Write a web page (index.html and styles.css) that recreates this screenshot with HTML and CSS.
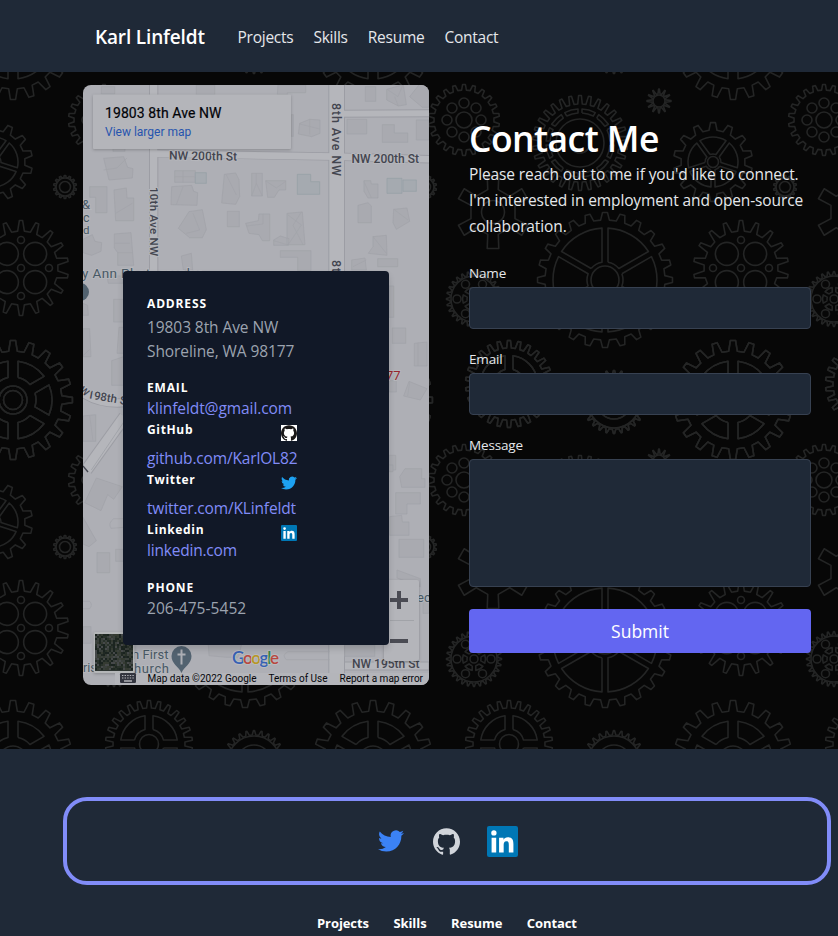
FILE: index.html
```html
<!DOCTYPE html>
<html lang="en">
<head>
<meta charset="utf-8">
<title>Karl Linfeldt</title>
<link rel="stylesheet" href="styles.css">
</head>
<body>
<svg class="defs" width="0" height="0" aria-hidden="true">
  <defs>
    <symbol id="twitter" viewBox="0 0 24 24"><path d="M23.953 4.57a10 10 0 01-2.825.775 4.958 4.958 0 002.163-2.723c-.951.555-2.005.959-3.127 1.184a4.92 4.92 0 00-8.384 4.482C7.69 8.095 4.067 6.13 1.64 3.162a4.822 4.822 0 00-.666 2.475c0 1.71.87 3.213 2.188 4.096a4.904 4.904 0 01-2.228-.616v.06a4.923 4.923 0 003.946 4.827 4.996 4.996 0 01-2.212.085 4.936 4.936 0 004.604 3.417 9.867 9.867 0 01-6.102 2.105c-.39 0-.779-.023-1.17-.067a13.995 13.995 0 007.557 2.209c9.053 0 13.998-7.496 13.998-13.985 0-.21 0-.42-.015-.63A9.935 9.935 0 0024 4.59z"/></symbol>
    <symbol id="github" viewBox="0 0 24 24"><path d="M12 .297c-6.63 0-12 5.373-12 12 0 5.303 3.438 9.8 8.205 11.385.6.113.82-.258.82-.577 0-.285-.01-1.04-.015-2.04-3.338.724-4.042-1.61-4.042-1.61C4.422 18.07 3.633 17.7 3.633 17.7c-1.087-.744.084-.729.084-.729 1.205.084 1.838 1.236 1.838 1.236 1.07 1.835 2.809 1.305 3.495.998.108-.776.417-1.305.76-1.605-2.665-.3-5.466-1.332-5.466-5.93 0-1.31.465-2.38 1.235-3.22-.135-.303-.54-1.523.105-3.176 0 0 1.005-.322 3.3 1.23.96-.267 1.98-.399 3-.405 1.02.006 2.04.138 3 .405 2.28-1.552 3.285-1.23 3.285-1.23.645 1.653.24 2.873.12 3.176.765.84 1.23 1.91 1.23 3.22 0 4.61-2.805 5.625-5.475 5.92.42.36.81 1.096.81 2.22 0 1.606-.015 2.896-.015 3.286 0 .315.21.69.825.57C20.565 22.092 24 17.592 24 12.297c0-6.627-5.373-12-12-12"/></symbol>
    <symbol id="linkedin" viewBox="0 0 24 24"><rect width="24" height="24" rx="1.6" fill="#0077b5"/><path fill="#fff" d="M20.447 20.452h-3.554v-5.569c0-1.328-.027-3.037-1.852-3.037-1.853 0-2.136 1.445-2.136 2.939v5.667H9.351V9h3.414v1.561h.046c.477-.9 1.637-1.85 3.37-1.85 3.601 0 4.267 2.37 4.267 5.455v6.286zM5.337 7.433a2.062 2.062 0 01-2.063-2.065 2.064 2.064 0 112.063 2.065zm1.782 13.019H3.555V9h3.564v11.452z"/></symbol>
  </defs>
</svg>

<header class="nav">
  <a class="brand">Karl Linfeldt</a>
  <nav class="nav-links"><a>Projects</a><a>Skills</a><a>Resume</a><a>Contact</a></nav>
</header>

<main class="contact">
  <svg class="gears" viewBox="0 72 838 677" aria-hidden="true">
    <defs><g id="tile"></g></defs>
    <use href="#tile" x="-360"/><use href="#tile"/><use href="#tile" x="360"/><use href="#tile" x="720"/>
    <use href="#tile" x="-360" y="360"/><use href="#tile" y="360"/><use href="#tile" x="360" y="360"/><use href="#tile" x="720" y="360"/>
  </svg>

  <section class="map">
    <svg class="map-art" viewBox="83 85 346 600">
      <rect x="83" y="85" width="346" height="600" fill="#aeafb5"/>
      <g class="roads" transform="translate(83 80) scale(.33333)">
        <path d="M212 0V780" stroke-width="28"/>
        <path d="M225 220L760 230L1050 238" stroke-width="25"/>
        <path d="M785 101L1050 100" stroke-width="24"/>
        <path d="M761 0V1830" stroke-width="50"/>
      </g>
      <g class="roads-fill" transform="translate(83 80) scale(.33333)">
        <path d="M212 0V780" stroke-width="22"/>
        <path d="M213 221L760 230L1050 238" stroke-width="20"/>
        <path d="M762 101L1050 100" stroke-width="18"/>
        <path d="M761 0V1830" stroke-width="44"/>
      </g>
      <g class="roads" transform="translate(83 270) scale(.33333)">
        <path d="M0 370Q60 410 150 395" stroke-width="28"/>
        <path d="M125 440L10 600" stroke-width="38"/>
      </g>
      <g class="roads-fill" transform="translate(83 270) scale(.33333)">
        <path d="M0 370Q60 410 150 395" stroke-width="22"/>
        <path d="M125 440L10 600" stroke-width="32"/>
        <path d="M125 452L25 600" stroke-width="2" stroke="#999ba2"/>
      </g>
      <g class="bld" transform="translate(83 80) scale(.33333)">
        <path d="M55 20h40v22H55zM340 15h55v30h-55zM585 15h83v23h-55v6h-30zM847 20h31v44h-31zM911 28l50-14 9 60-24 4-35-18zM980 50l30-38h28v70h-20zM625 104h6v65h-6zM650 130l30-12 31 2v40l-25 10-40-8zM62 235l60-5 12 32 16 4-2 28-70 6zM20 320h52v78H38v-46H20zM93 330l37-6 2 30h20v68H98zM275 272h62v35h-62zM266 320l60-4 6 18 12 4-2 38-78-2zM424 283l34-4 10 20 2 50-12 24-42-4zM506 280h32v68h-32zM548 302h60v28h-20l-14 22h-20zM318 395l40-6 12 60-12 24h-38l-34-28zM433 394h36v46h-36zM488 430l38-8 2-20h32v80h-22l-10-18-30-4zM612 400l46-4 8 98h-54zM572 480l20-12 26 8-2 20h-44zM94 462l50-4 8 98h-48v-38l-10-14zM0 478l28-14 8 20 20 4-2 26-28 12-26-8zM295 528l30-8 4 50h-28zM592 512h92v60h-40v-40h-52zM792 118h59v44h-59zM898 134h36v25h40v28h-76zM1000 120h38v60h-38zM843 302h20l2 10h20v42h-30l-12-20zM825 376l30-8 10 10v50h-40zM932 388l40-4 8 40-40 24-10-20zM870 470l40-4 2 60-56-6 14-20zM806 540l40-6 4 36h-44zM884 536h60v24h-60zM90 206h36v8H90z"/>
        <path fill="#a5aab0" stroke="#929da4" d="M337 278h33v32h-33zM643 283h40v22h27v38h-67zM912 295h45v45h-45zM960 300h40v34h-40z"/>
        <path fill="none" d="M62 270l40-6 30-30M300 273v34M275 290h62M300 320l-20 54M430 285l30 60M520 280v30l-14 38M520 310l18 38M550 304l30 20 28-20M330 400l20 50-40 10M540 402v30l-50 6M615 405l40 30-40 60M655 396l-25 40 30 58M96 490h45M105 518h45M650 132l60 15M680 118v45M915 30l30 20 15-36M935 50l10 26M843 305l22 48M935 390l40 30M870 470l40 50M810 560l40-20M572 482l40 12M98 400l50-30"/>
      </g>
      <g class="bld" transform="translate(83 270) scale(.33333)">
        <path d="M72 18h48v22H76zM92 88h34v68H92zM0 100l14 6 2 30H0zM0 176h20l4 84H0zM108 172h14v78h-20zM86 272l36-12v86H86zM0 438l38-4v80H0zM918 48h14v94h-14zM928 174h40v46h-40zM994 220l38-4v72h-38zM918 332h22v34h-22zM978 334l54 22-20 34-50-12zM918 556h20v44h-20z"/>
        <path fill="none" d="M1005 218v70M980 336l-6 42M20 436l10 76M0 258l20-20"/>
      </g>
      <g class="bld" transform="translate(83 460) scale(.33333)">
        <path d="M40 54L118 80 92 118 74 104 54 152 5 128zM0 172l40 70-22 18-18-8zM42 278h38v60H42zM98 268h24v36H98zM918 15h12v20h-12zM950 50l16-24h50v30h10v26h-70zM938 98h74v34h-40v30h-34zM920 170l36-4 2 20h20v40h-58zM948 238h74v54h-74zM942 330l70 26v24l-70-26zM0 500h24v50H0zM376 552h100l-10 40h-34l-54-5zM785 555h90v34h-90zM1020 420h18v40h-18z"/>
        <path fill="none" d="M122 176H92Q74 190 84 205L122 202M0 424H20Q30 434 20 446H0M740 575H615Q595 585 610 599H740"/>
      </g>
      <path d="M345 662H429V670H345" fill="#b5b6bb" stroke="#9c9da3"/>
      <g class="map-text">
        <text x="169" y="159.5" font-size="12" textLength="68" transform="rotate(1 169 159)">NW 200th St</text>
        <text x="351.500" y="162.500" font-size="12">NW 200th St</text>
        <text transform="translate(149.500 187) rotate(90)" font-size="11.500" textLength="69">10th Ave NW</text>
        <text transform="translate(331.500 103) rotate(90)" font-size="12.500" textLength="73">8th Ave NW</text>
        <text transform="translate(331.500 260) rotate(90)" font-size="12.500" textLength="73">8th Ave NW</text>
        <text x="352" y="667.500" font-size="12">NW 195th St</text>
        <text x="87" y="398" font-size="11.500" transform="rotate(10 87 398)">198th St</text>
        <text x="79" y="391" font-size="10" transform="rotate(40 79 391)">W</text>
        <g class="poi"><text x="82" y="209" font-size="13">&amp;</text><text x="83" y="222" font-size="12.500">c</text><text x="83" y="234" font-size="11.500">d</text>
        <text x="82" y="278" font-size="13.500" textLength="119">y Ann Photography</text>
        <text x="132" y="659" font-size="13" textLength="36.500">n First</text><text x="134" y="673" font-size="13" textLength="35">hurch</text><text x="83" y="672" font-size="12.500">ris</text><text x="417" y="602" font-size="13">ec</text></g>
        <text x="364" y="379.500" font-size="13" class="red">98177</text>
      </g>
      <path d="M83 466l5 6" stroke="#43454f" stroke-width="1.300"/>
      <circle cx="80" cy="292" r="9" fill="#52626f"/>
      <g fill="#526270"><path d="M171.500 656a10 10 0 1 1 20 0c0 8-7 10-10 17-3-7-10-9-10-17z"/><path d="M181.500 649.500v15M177.500 654.500h8" stroke="#adafb5" stroke-width="2"/></g>
      <g class="raised"><rect x="93" y="94.500" width="198" height="54.500" rx="1" fill="#b4b5ba"/><rect x="384" y="580" width="35" height="81" rx="2" fill="#b4b5ba"/><rect x="93.500" y="632" width="41" height="41" rx="2" fill="#b4b6b8"/></g>
      <path d="M390 620.500h24" stroke="#a1a3a8"/><path d="M390 600h18M399 591v18M390 641h18" stroke="#4a4b53" stroke-width="4"/>
      <text class="place" x="105" y="118" textLength="116.500">19803 8th Ave NW</text>
      <text class="larger" x="105" y="136">View larger map</text>
      <g id="satellite"><rect x="95" y="634" width="38" height="37" fill="#2d3431"/></g>
      <path d="M115 673H429V685H115z" fill="#b4b5ba"/>
      <rect x="120" y="673" width="16" height="10" rx="1.200" fill="#33353f"/>
      <path d="M122 675.500h12M122 678h12" stroke="#b4b5ba" stroke-width="1.200" stroke-dasharray="1.400 1.200"/><path d="M124 681h8" stroke="#b4b5ba" stroke-width="1.400"/>
      <g class="credit"><text x="147.500" y="681.500" textLength="109">Map data ©2022 Google</text><text x="268.500" y="681.500" textLength="59">Terms of Use</text><text x="339.500" y="681.500" textLength="83.500">Report a map error</text></g>
      <text class="logo" x="232" y="664" textLength="47"><tspan fill="#3561b4">G</tspan><tspan fill="#b8483f">o</tspan><tspan fill="#b79725">o</tspan><tspan fill="#3561b4">g</tspan><tspan fill="#368649">l</tspan><tspan fill="#b8483f">e</tspan></text>
    </svg>
    <div class="card">
      <h2>ADDRESS</h2>
      <p class="address">19803 8th Ave NW<br>Shoreline, WA 98177</p>
      <h2 class="spaced">EMAIL</h2>
      <a class="email">klinfeldt@gmail.com</a>
      <div class="row"><h2>GitHub</h2><svg class="icon gh"><use href="#github"/></svg></div>
      <a class="low">github.com/KarlOL82</a>
      <div class="row"><h2>Twitter</h2><svg class="icon tw"><use href="#twitter"/></svg></div>
      <a class="low">twitter.com/KLinfeldt</a>
      <div class="row"><h2>Linkedin</h2><svg class="icon"><use href="#linkedin"/></svg></div>
      <a class="li">linkedin.com</a>
      <h2 class="phone">PHONE</h2>
      <p class="number">206-475-5452</p>
    </div>
  </section>

  <form class="form">
    <h1>Contact Me</h1>
    <p class="intro">Please reach out to me if you'd like to connect.<br>I'm interested in employment and open-source<br>collaboration.</p>
    <label for="name">Name</label><input id="name">
    <label for="email">Email</label><input id="email">
    <label for="message">Message</label><textarea id="message"></textarea>
    <button type="button">Submit</button>
  </form>
</main>

<footer>
  <div class="social">
    <svg class="s-tw"><use href="#twitter"/></svg>
    <svg class="s-gh"><use href="#github"/></svg>
    <svg class="s-li"><use href="#linkedin"/></svg>
  </div>
  <nav class="foot-links"><a>Projects</a><a>Skills</a><a>Resume</a><a>Contact</a></nav>
</footer>
<script src="gears.js"></script>
</body>
</html>
```
FILE: styles.css
```css
* { box-sizing: border-box; }
body { margin: 0; width: 838px; height: 936px; overflow: hidden; background: #1f2937; color: #fff; font-family: "Open Sans", "Noto Sans", sans-serif; font-size: 15.5px; }
h1, h2, p { margin: 0; }
.defs { position: absolute; }
.nav { height: 72px; padding: 2px 0 0 95px; display: flex; align-items: center; background: #1f2937; }
.brand { width: 142.5px; font-size: 19px; font-weight: 600; letter-spacing: -.15px; }
.nav-links { display: flex; gap: 20px; color: #e5e7eb; letter-spacing: -.25px; }
.contact { position: relative; height: 677px; padding: 13px 27px 0 83px; display: flex; gap: 40px; background: #070707; overflow: hidden; }
.gears { position: absolute; inset: 0; width: 838px; height: 677px; }
#tile { fill: none; stroke: #242525; stroke-width: 1.6; }
.map { position: relative; width: 346px; height: 600px; border-radius: 8px; overflow: hidden; }
.map-art { display: block; width: 346px; height: 600px; }
.roads path { stroke: #9c9da4; fill: none; }
.roads-fill path { stroke: #b5b6bb; fill: none; }
.roads-fill path[stroke] { stroke: #999ba2; }
.bld path { fill: #a9aab0; stroke: #a0a1a7; stroke-width: 2; }
.bld path[fill="none"] { fill: none; stroke: #a2a3a9; }
.bld path[fill="#a5aab0"] { fill: #a5aab0; stroke: #949ea5; }
.map-text { font-family: Roboto, sans-serif; font-weight: 500; fill: #43454f; stroke: #b5b6bb; stroke-width: 2px; paint-order: stroke; }
.poi { font-weight: 400; fill: #485965; }
.red { fill: #97262d; font-weight: 400; }
.raised { filter: drop-shadow(0 1px 1.5px rgba(0, 0, 0, .22)); }
.place { font: 14px Roboto, sans-serif; fill: #020308; stroke: #020308; stroke-width: .2px; }
.larger { font: 12px Roboto, sans-serif; fill: #2754ae; }
.credit { font: 10px Roboto, sans-serif; fill: #05060a; }
.logo { font: 600 17px Lato, sans-serif; stroke: #b9babf; stroke-width: 2px; paint-order: stroke; }
.card { position: absolute; left: 40px; top: 186px; width: 266px; height: 374px; padding: 21px 24px 0; border-radius: 4px; background: #111827; box-shadow: 0 4px 6px rgba(0, 0, 0, .15); }
.card h2 { font-size: 12px; line-height: 24px; font-weight: 700; letter-spacing: .7px; }
.card p { color: #9ca3af; line-height: 24px; letter-spacing: -.08px; }
.card .address { margin-top: -1px; }
.card a { display: block; color: #818cf8; line-height: 22px; letter-spacing: -.16px; }
.card .email { margin-top: -2px; height: 23px; letter-spacing: -.08px; }
.card .spaced { margin-top: 14px; line-height: 22px; letter-spacing: .85px; }
.card h2:first-child, .card .phone { letter-spacing: .85px; }
.row { display: flex; justify-content: space-between; width: 150px; height: 21px; }
.card .row h2 { line-height: 20px; letter-spacing: .65px; }
.icon { width: 16px; height: 16px; margin-top: 5px; }
.gh { background: #fff; fill: #191717; }
.tw { fill: #1da1f2; }
.card .low { height: 29px; padding-top: 6px; }
.card .li { margin-top: -2px; letter-spacing: -.2px; }
.card .phone { margin-top: 16px; line-height: 22px; }
.card .number { line-height: 21px; margin-top: -1px; letter-spacing: .05px; }
.form { position: relative; width: 342px; padding-top: 32px; }
h1 { font-size: 35.5px; line-height: 43px; height: 44px; font-weight: 600; letter-spacing: -.55px; }
.intro { color: #e5e7eb; line-height: 26px; letter-spacing: -.12px; white-space: nowrap; height: 98px; }
label { display: block; height: 28px; line-height: 28px; font-size: 13.5px; color: #e5e7eb; letter-spacing: -.15px; }
input, textarea { display: block; width: 342px; height: 42px; margin: 0 0 16px; border: 1px solid #374151; border-radius: 4px; background: #1f2937; resize: none; }
textarea { height: 128px; margin-bottom: 22px; }
button { display: block; width: 342px; height: 44px; border: 0; border-radius: 4px; background: #6366f1; color: #fff; font: 17.5px "Open Sans", sans-serif; }
footer { height: 187px; padding-top: 48px; background: #1f2937; }
.social { width: 768px; height: 88px; margin-left: 63px; padding-left: 2px; border: 4px solid #818cf8; border-radius: 24px; display: flex; justify-content: center; align-items: center; }
.s-tw { width: 26px; height: 26px; fill: #3b82f6; margin-right: 29.5px; }
.s-gh { width: 27px; height: 27px; fill: #d1d5db; margin-right: 27px; }
.s-li { width: 31px; height: 31px; }
.foot-links { display: flex; gap: 24.5px; margin: 28px 0 0 317px; font-size: 13px; line-height: 20px; font-weight: 700; letter-spacing: -.08px; }
```
FILE: gears.js
```js
const tile = document.getElementById('tile');
const NS = 'http://www.w3.org/2000/svg';
const pt = (cx, cy, r, a) => (cx + r * Math.sin(a)).toFixed(2) + ' ' + (cy - r * Math.cos(a)).toFixed(2);
function path(d) {
  const p = document.createElementNS(NS, 'path');
  p.setAttribute('d', d);
  p.setAttribute('stroke-linejoin', 'round');
  tile.appendChild(p);
}
function ring(cx, cy, r) {
  path(`M${cx - r} ${cy}a${r} ${r} 0 1 0 ${2 * r} 0a${r} ${r} 0 1 0 ${-2 * r} 0`);
}
// Toothed outline: root and tip widths are fractions of one tooth pitch.
function gear(cx, cy, n, body, outer, root = 0.28, tip = 0.14) {
  const pitch = 2 * Math.PI / n, pts = [];
  for (let i = 0; i < n; i++) {
    const a = i * pitch;
    pts.push(pt(cx, cy, body, a - pitch * root), pt(cx, cy, outer, a - pitch * tip),
      pt(cx, cy, outer, a + pitch * tip), pt(cx, cy, body, a + pitch * root));
  }
  path('M' + pts.join('L') + 'Z');
}
// Ring sectors separated by spokes of constant width.
function sectors(cx, cy, n, inner, outer, gap, offset = 0) {
  for (let i = 0; i < n; i++) {
    const a = offset + i * 2 * Math.PI / n, b = a + 2 * Math.PI / n;
    const go = Math.asin(gap / outer), gi = Math.asin(Math.min(0.95, gap / inner));
    path(`M${pt(cx, cy, inner, a + gi)}L${pt(cx, cy, outer, a + go)}A${outer} ${outer} 0 0 1 ${pt(cx, cy, outer, b - go)}L${pt(cx, cy, inner, b - gi)}A${inner} ${inner} 0 0 0 ${pt(cx, cy, inner, a + gi)}`);
  }
}
function holes(cx, cy, n, dist, r, offset = 0) {
  for (let i = 0; i < n; i++) {
    const a = offset + i * 2 * Math.PI / n;
    ring(cx + dist * Math.sin(a), cy - dist * Math.cos(a), r);
  }
}
for (const y of [40, 400]) {
  gear(13, y, 20, 49, 59.5); sectors(13, y, 6, 23, 39, 5); ring(13, y, 14); ring(13, y, 9.5);
}
gear(21, 268, 18, 37, 47.5, 0.26, 0.1); holes(21, 268, 4, 20, 11.5, Math.PI / 4); holes(21, 268, 4, 28, 3.5); ring(21, 268, 3.5);
gear(65, 187, 14, 9.5, 11.5); ring(65, 187, 9); ring(65, 187, 5.5);
gear(-7, 162, 14, 32, 39.5); sectors(-7, 162, 5, 8, 25, 2, 0.628); ring(-7, 162, 5.5);
gear(104, 120, 22, 30, 35.5); ring(104, 120, 8); holes(104, 120, 8, 17, 5);
gear(220, 143, 30, 39, 47.5); sectors(220, 143, 12, 30, 34, 2); ring(220, 143, 24); ring(220, 143, 10);
gear(299, 101, 12, 7, 12, 0.3, 0.06); ring(299, 101, 6);
gear(133, 212, 6, 23, 37, 0.22, 0.15); ring(133, 212, 11.5);
gear(245, 280, 24, 60, 67.5); sectors(245, 280, 6, 18, 52, 3); ring(245, 280, 14);
gear(114, 299, 28, 24, 27.5, 0.28, 0.08); ring(114, 299, 23); holes(114, 299, 6, 17, 4, Math.PI / 6); ring(114, 299, 4); sectors(114, 299, 6, 7, 11.5, 1.8);
for (const y of [24, 384]) {
  gear(149, y, 26, 36, 43.5); sectors(149, y, 4, 15, 28.5, 4); ring(149, y, 9.5);
}
for (const y of [42, 402]) {
  gear(254, y, 26, 27, 31.5, 0.28, 0.07); ring(254, y, 26); ring(254, y, 17);
}
const sat = document.getElementById('satellite');
const tones = ['#202923', '#3a403c', '#46494a', '#29322a', '#1b2420', '#353b32'];
let seed = 7;
for (let y = 634; y < 670; y += 2) for (let x = 95; x < 132; x += 2) {
  seed = (seed * 1103515245 + 12345) % 2147483648;
  const r = document.createElementNS(NS, 'rect');
  r.setAttribute('x', x); r.setAttribute('y', y); r.setAttribute('width', 2); r.setAttribute('height', 2);
  r.setAttribute('fill', tones[Math.floor(seed / 65536) % 6]);
  sat.appendChild(r);
}
```
